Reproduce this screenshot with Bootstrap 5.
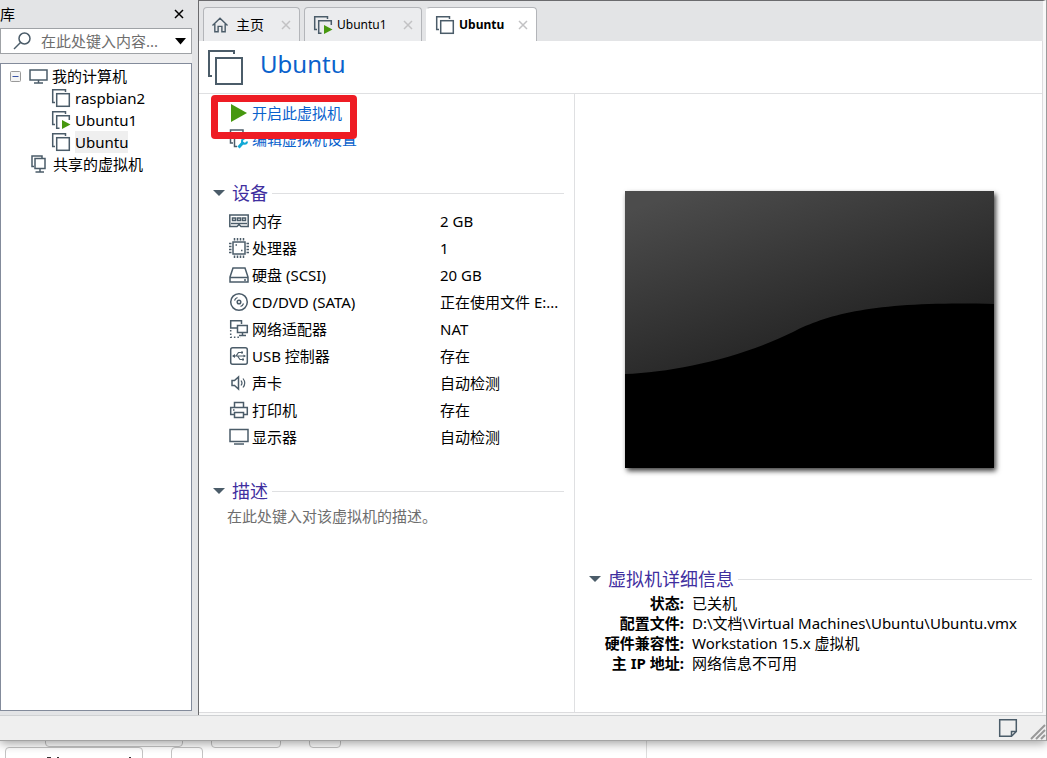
<!DOCTYPE html>
<html lang="zh-CN">
<head>
<meta charset="utf-8">
<meta name="viewport" content="width=device-width, initial-scale=1">
<title>Ubuntu</title>
<link href="https://cdn.jsdelivr.net/npm/bootstrap@5.3.0/dist/css/bootstrap.min.css" rel="stylesheet">
<style>
:root{--ink:#4b5c69;--link:#0a62cc;--head:#3f2f9f;--rule:#dfe0e2}
body{font:15px/22px "Noto Sans","Noto Sans CJK SC",sans-serif;color:#000;background:#fff;min-height:100vh}
button{border:0;background:none;padding:0;color:inherit;line-height:inherit;font:inherit}
svg{display:block;flex:none}
.ico{fill:none;stroke:var(--ink);stroke-width:1.5}
.app-window{background:#e3e4e6;border-right:1px solid #9a9a9a;border-bottom:1px solid #a3a3a3;box-shadow:0 2px 10px rgba(0,0,0,.4);z-index:1}
.library{width:192px}
.library-head{height:28px}
.search-box{height:26px;border:1px solid #9fa2a6;background:#fff}
.search-box input{border:0;outline:0;background:none;min-width:0;width:124px;padding:0}
.search-box input::placeholder{color:#6e6e6e;opacity:1}
.search-gap{height:9px;background:#eeeeef}
.tree-panel{border:1px solid #838b9b;background:#fff;margin-bottom:4px;padding-top:1px}
.tree-row{height:22px}
.level-0{padding-left:9px}
.level-1{padding-left:50px}
.level-share{padding-left:28px}
.picked{background:#efefef}
.workspace{margin-left:6px;border-left:1px solid #6b6b6e;border-top:1px solid #6b6b6e;border-right:3px solid #f8f8f8;min-width:0}
.page-area{background:#fff;border-right:1px solid #dcdcde;border-bottom:1px solid #dcdcde;box-shadow:0 2px #f8f8f8;margin-bottom:2px}
.tab-strip{height:40px;padding:6px 0 0 4px}
.vm-tab{height:34px;border:1px solid #b3b5b9;border-bottom:0;border-radius:4px 4px 0 0;background:#ebecee;font-size:12px}
.vm-tab.current{background:#fff;border-left-color:#fff;font-weight:700}
.tab-home{width:97px;font-size:14px}
.tab-run{width:118px}
.tab-now{width:111px}
.tab-close{margin-left:auto}
.vm-title{height:53px;border-bottom:1px solid var(--rule);padding:0 0 0 8px}
.vm-title h1{font-size:24px;line-height:32px;color:var(--link);padding-bottom:6px}
.summary{width:376px;border-right:1px solid var(--rule)}
.actions{padding:6px 0 0 30px}
.actions a{height:26px;color:var(--link)}
.callout-frame{position:absolute;left:12px;top:1px;width:146px;height:44px;border:7px solid #ee1c24;border-radius:4px;pointer-events:none}
.sec-body{padding:27px 10px 0 14px}
.sec-head{height:28px;font-size:18px;color:var(--head)}
.sec-head button{gap:7px}
.sec-head hr{border-color:var(--rule);opacity:1;margin:0 0 0 4px}
.device-table{margin:0 0 27px 16px;width:calc(100% - 16px)}
.device-table td,.device-table th{height:27px;padding:0;font-weight:400}
.device-table th{width:211px}
.dev{display:flex;align-items:center;gap:3px}
.note{color:#6e6e6e;margin:0;padding-left:14px}
.detail-col{padding:97px 10px 0 14px}
.facts td,.facts th{height:20px;padding:0;line-height:20px}
.facts th{width:95px;text-align:right}
.facts td{padding-left:8px}
.screen{width:369px;height:277px;margin:0 2px 97px 0;box-shadow:2px 3px 5px rgba(0,0,0,.75)}
.status-line{height:25px;border-top:1px solid #cfd1d3;background:#efefef}
.under-page{height:17px;overflow:hidden}
.under-page svg{width:100%;height:17px}
</style>
</head>
<body class="d-flex flex-column">
<svg width="0" height="0" class="position-absolute" aria-hidden="true">
<symbol id="vm" viewBox="0 0 20 20"><path d="M4 14.500H1.700V1.700H14.500V4"/><rect x="5.700" y="5.700" width="12.600" height="12.600"/></symbol>
<symbol id="vmrun" viewBox="0 0 20 20"><path d="M4 14.500H1.700V1.700H14.500V4M8.500 18.300H5.700V5.700H18.300V10"/><path d="M11 10L19.500 14.500 11 19Z" fill="#47980f" stroke="none"/></symbol>
<symbol id="cross" viewBox="0 0 10 10"><path d="M1 1L9 9M9 1L1 9"/></symbol>
</svg>
<div class="app-window flex-grow-1 d-flex flex-column position-relative">
 <div class="d-flex flex-grow-1">
  <aside class="library d-flex flex-column flex-shrink-0">
   <div class="library-head d-flex align-items-center justify-content-between pe-2"><span>库</span><button aria-label="关闭"><svg width="10" height="10" stroke="#000" stroke-width="1.500"><use href="#cross"/></svg></button></div>
   <div class="search-box d-flex align-items-center">
    <svg class="ico ms-2 me-2" width="24" height="18" viewBox="0 0 24 18"><circle cx="15.500" cy="6.500" r="5.500"/><path d="M11.500 10.500L5 17"/></svg>
    <input type="text" placeholder="在此处键入内容..." aria-label="搜索">
    <button aria-label="搜索选项" class="ms-auto me-1"><svg width="13" height="7"><path d="M1 0H12L6.500 6.500Z"/></svg></button>
   </div>
   <div class="search-gap"></div>
   <nav class="tree-panel flex-grow-1">
    <ul class="list-unstyled m-0">
     <li class="tree-row level-0 d-flex align-items-center"><button aria-label="折叠"><svg width="11" height="11"><rect x=".5" y=".5" width="10" height="10" rx="1" fill="#f4f4f4" stroke="#999"/><path d="M2.500 5.500H8.500" stroke="#3953a5"/></svg></button><svg class="ico ms-2 me-1" width="19" height="18" viewBox="0 0 19 18"><path d="M1 3H18V13H1ZM9.500 13V16M5 16H14"/></svg><span>我的计算机</span></li>
     <li class="tree-row level-1 d-flex align-items-center"><svg class="ico me-1" width="20" height="20" viewBox="0 0 20 20"><use href="#vm"/></svg><span>raspbian2</span></li>
     <li class="tree-row level-1 d-flex align-items-center"><svg class="ico me-1" width="20" height="20" viewBox="0 0 20 20"><use href="#vmrun"/></svg><span>Ubuntu1</span></li>
     <li class="tree-row level-1 d-flex align-items-center"><svg class="ico me-1" width="20" height="20" viewBox="0 0 20 20"><use href="#vm"/></svg><span class="picked">Ubuntu</span></li>
     <li class="tree-row level-share d-flex align-items-center"><svg class="ico me-1" width="20" height="18" viewBox="0 0 20 18"><path d="M5 11.500H3V1H13V3M6 3.500H16V13.500H6ZM11 13.500V17M6.500 17H15"/></svg><span>共享的虚拟机</span></li>
    </ul>
   </nav>
  </aside>
  <main class="workspace flex-grow-1 d-flex flex-column">
   <div class="tab-strip d-flex">
    <div class="vm-tab tab-home d-flex align-items-center px-2 me-1"><svg class="ico me-2" width="16" height="18" viewBox="0 0 17 18"><path d="M.5 9.500L8.500 1.800 16.500 9.500M3 8V16.200H6.500V10.500H10.500V16.200H14V8"/></svg><button>主页</button><button class="tab-close" aria-label="关闭主页"><svg width="10" height="10" stroke="#c2c2c4" stroke-width="1.500"><use href="#cross"/></svg></button></div>
    <div class="vm-tab tab-run d-flex align-items-center ps-1 pe-2 me-1"><svg class="ico me-1 ms-1" width="20" height="20" viewBox="0 0 20 20"><use href="#vmrun"/></svg><button>Ubuntu1</button><button class="tab-close" aria-label="关闭 Ubuntu1"><svg width="10" height="10" stroke="#c2c2c4" stroke-width="1.500"><use href="#cross"/></svg></button></div>
    <div class="vm-tab tab-now current d-flex align-items-center ps-1 pe-2"><svg class="ico ms-1 me-1" width="20" height="20" viewBox="0 0 20 20"><use href="#vm"/></svg><button>Ubuntu</button><button class="tab-close" aria-label="关闭 Ubuntu"><svg width="10" height="10" stroke="#c2c2c4" stroke-width="1.500"><use href="#cross"/></svg></button></div>
   </div>
   <div class="page-area flex-grow-1 d-flex flex-column">
    <div class="vm-title d-flex align-items-center"><svg width="37" height="37" viewBox="0 0 37 37" fill="none" stroke="#4b5c69" stroke-width="2"><path d="M5 27H2V2H27V5"/><rect x="9" y="9" width="26" height="26"/></svg><h1 class="mb-0 ms-3 fw-normal">Ubuntu</h1></div>
    <div class="d-flex flex-grow-1">
     <section class="summary flex-shrink-0">
      <div class="actions position-relative">
       <a href="#" class="d-flex align-items-center text-decoration-none"><svg class="me-1" width="19" height="18"><path d="M2 0L18 9 2 18Z" fill="#47980f"/></svg>开启此虚拟机</a>
       <a href="#" class="d-flex align-items-center text-decoration-none"><svg class="ico me-1" width="19" height="20" viewBox="0 0 19 20"><path d="M4 14H1.500V1H14V3M8 17.500H5.500V5H17V8"/><path d="M9.500 18.500L14.500 13" stroke="#12a9d6" stroke-width="3"/><path d="M18 12.500A2.500 2.500 0 1 1 15.500 9.800" stroke="#12a9d6" stroke-width="2"/></svg>编辑虚拟机设置</a>
       <div class="callout-frame"></div>
      </div>
      <div class="sec-body">
       <div class="sec-head d-flex align-items-center"><button class="d-flex align-items-center"><svg width="12" height="7"><path d="M0 0H12L6 6Z" fill="#4b5c69"/></svg>设备</button><hr class="flex-grow-1"></div>
       <table class="device-table"><tbody>
        <tr><th scope="row"><div class="dev"><svg class="ico" width="20" height="20" viewBox="0 0 20 20"><path d="M.8 4H19.200V15.500H12L10 13.500 8 15.500H.8ZM2 12.500H18"/><path d="M3.500 7H6.500V9.500H3.500ZM8.500 7H11.500V9.500H8.500ZM13.500 7H16.500V9.500H13.500Z"/></svg>内存</div></th><td>2 GB</td></tr>
        <tr><th scope="row"><div class="dev"><svg class="ico" width="20" height="20" viewBox="0 0 20 20"><rect x="4" y="4" width="12" height="12"/><path d="M5.500 0V2.500M8.500 0V2.500M11.500 0V2.500M14.500 0V2.500M5.500 17.500V20M8.500 17.500V20M11.500 17.500V20M14.500 17.500V20M0 5.500H2.500M0 8.500H2.500M0 11.500H2.500M0 14.500H2.500M17.500 5.500H20M17.500 8.500H20M17.500 11.500H20M17.500 14.500H20M6.500 7H8M12 12.500H13.500"/></svg>处理器</div></th><td>1</td></tr>
        <tr><th scope="row"><div class="dev"><svg class="ico" width="20" height="20" viewBox="0 0 20 20"><path d="M1 12L4 3H16L19 12V17H1ZM1 12.500H19M15 15H17"/></svg>硬盘 (SCSI)</div></th><td>20 GB</td></tr>
        <tr><th scope="row"><div class="dev"><svg class="ico" width="20" height="20" viewBox="0 0 20 20"><circle cx="10" cy="10" r="8.300"/><circle cx="10" cy="10" r="1.800"/><path d="M5.500 8.500Q6.200 6.200 8.500 5.500M14.500 11.500Q13.800 13.800 11.500 14.500" stroke-width="1.200"/></svg>CD/DVD (SATA)</div></th><td>正在使用文件 E:...</td></tr>
        <tr><th scope="row"><div class="dev"><svg class="ico" width="20" height="20" viewBox="0 0 20 20"><path d="M7 9H1.700V1.700H12.500V5M4 9H8M8.500 6.500H18.300V13.500H8.500ZM13.500 13.500V16M10 16.500H17"/><path d="M1.700 11V18.300H12" stroke-dasharray="1.500 2"/></svg>网络适配器</div></th><td>NAT</td></tr>
        <tr><th scope="row"><div class="dev"><svg class="ico" width="20" height="20" viewBox="0 0 20 20"><rect x="1.700" y="1.700" width="16.600" height="16.600" rx="2"/><path d="M4 10H15.500M7 10L9.500 6.500H12M8.500 10L11 13.500H13" stroke-width="1.200"/><path d="M3 10L6 8V12ZM12 5.500H14V7.500H12ZM13 12.500H15V14.500H13ZM14.500 8.500L17 10 14.500 11.500Z" fill="#4b5c69" stroke="none"/></svg>USB 控制器</div></th><td>存在</td></tr>
        <tr><th scope="row"><div class="dev"><svg class="ico" width="20" height="20" viewBox="0 0 20 20"><path d="M3 7.500H5.500L9.500 4V16L5.500 12.500H3Z"/><path d="M12 7.500Q14 10 12 12.500M14 5.500Q17.500 10 14 14.500" stroke-width="1.200"/></svg>声卡</div></th><td>自动检测</td></tr>
        <tr><th scope="row"><div class="dev"><svg class="ico" width="20" height="20" viewBox="0 0 20 20"><path d="M5.500 7.500V2.500H14.500V7.500M5.500 14.500H1.700V7.500H18.300V14.500H14.500M5.500 12.500H14.500V17.500H5.500ZM4 10H5.500"/></svg>打印机</div></th><td>存在</td></tr>
        <tr><th scope="row"><div class="dev"><svg class="ico" width="20" height="20" viewBox="0 0 20 20"><path d="M1 2.500H19V14.500H1ZM5 17H15"/></svg>显示器</div></th><td>自动检测</td></tr>
       </tbody></table>
       <div class="sec-head d-flex align-items-center"><button class="d-flex align-items-center"><svg width="12" height="7"><path d="M0 0H12L6 6Z" fill="#4b5c69"/></svg>描述</button><hr class="flex-grow-1"></div>
       <p class="note">在此处键入对该虚拟机的描述。</p>
      </div>
     </section>
     <section class="detail-col flex-grow-1 d-flex flex-column">
      <svg class="screen align-self-center" viewBox="0 0 369 277" role="img" aria-label="预览"><defs><linearGradient id="g" gradientUnits="userSpaceOnUse" x1="30" y1="10" x2="105" y2="235"><stop offset="0" stop-color="#4c4c4c"/><stop offset="1" stop-color="#1b1b1b"/></linearGradient></defs><rect width="369" height="277" fill="url(#g)"/><path d="M0 183C50 181 115 167 168 141C205 122 255 110 369 113V277H0Z"/></svg>
      <div class="sec-head d-flex align-items-center"><button class="d-flex align-items-center"><svg width="12" height="7"><path d="M0 0H12L6 6Z" fill="#4b5c69"/></svg>虚拟机详细信息</button><hr class="flex-grow-1"></div>
      <table class="facts"><tbody>
       <tr><th scope="row">状态:</th><td>已关机</td></tr>
       <tr><th scope="row">配置文件:</th><td>D:\文档\Virtual Machines\Ubuntu\Ubuntu.vmx</td></tr>
       <tr><th scope="row">硬件兼容性:</th><td>Workstation 15.x 虚拟机</td></tr>
       <tr><th scope="row">主 IP 地址:</th><td>网络信息不可用</td></tr>
      </tbody></table>
     </section>
    </div>
   </div>
  </main>
 </div>
 <footer class="status-line d-flex justify-content-end align-items-center">
  <button class="me-2" aria-label="消息日志"><svg class="ico" width="20" height="20" viewBox="0 0 20 20"><path d="M1.700 1.700H18.300V13.500L13.500 18.300H1.700ZM13.500 18.300V13.500H18.300"/></svg></button>
  <svg class="align-self-end ms-1" width="16" height="16" stroke="#999" stroke-width="2"><path d="M1 15L15 1M6 15L15 6M11 15L15 11"/></svg>
 </footer>
</div>
<div class="under-page"><svg fill="none" stroke="#c4c4c4" aria-hidden="true"><path d="M45.500 0V2Q45.500 5.500 49 5.500H179Q182.500 5.500 182.500 2V0M211.500 0V3Q211.500 6.500 215 6.500H277Q280.500 6.500 280.500 3V0M309.500 0V3Q309.500 6.500 313 6.500H337Q340.500 6.500 340.500 3V0M5.500 17V10Q5.500 6.500 9 6.500H139Q142.500 6.500 142.500 10V17M171.500 17V10Q171.500 6.500 175 6.500H199Q202.500 6.500 202.500 10V17"/><path d="M646.500 0V17" stroke="#dedede"/><path d="M47 16.500H51M57 16.500H59M129 16.500H131" stroke="#333"/></svg></div>
</body>
</html>
